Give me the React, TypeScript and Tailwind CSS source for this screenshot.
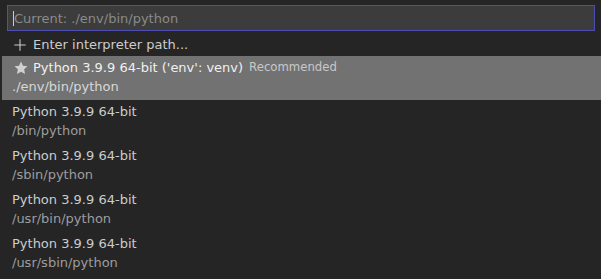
import React from "react";

const items = [
  { label: "Python 3.9.9 64-bit", path: "/bin/python" },
  { label: "Python 3.9.9 64-bit", path: "/sbin/python" },
  { label: "Python 3.9.9 64-bit", path: "/usr/bin/python" },
  { label: "Python 3.9.9 64-bit", path: "/usr/sbin/python" },
];

export default function App() {
  return (
    <div
      className="w-[601px] h-[279px] bg-[#252526] overflow-hidden text-[13px] text-[#cccccc]"
      style={{ fontFamily: '"DejaVu Sans", sans-serif' }}
    >
      <div className="pt-[5px] pl-[7px] pr-[6px]">
        <div className="h-[26px] border border-[#4d4db3] bg-[#3c3c3c] flex items-center pl-[5px]">
          <div className="w-px h-[15px] bg-[#cccccc]" />
          <span className="text-[#8a8a8a] leading-none">Current: ./env/bin/python</span>
        </div>
      </div>
      <div className="mt-[3px] pl-[2px]">
        <div className="h-[22px] flex items-center pl-[11px] gap-[6px]">
          <svg width="14" height="14" viewBox="0 0 16 16" fill="none" stroke="#cccccc" strokeWidth="1.2">
            <path d="M8 1.5v13M1.5 8h13" />
          </svg>
          <span>Enter interpreter path...</span>
        </div>
        <div className="h-[44px] bg-[#727272] flex flex-col pl-[10px]">
          <div className="h-[22px] flex items-center pt-[1px]">
            <svg width="14" height="14" viewBox="0 0 16 16" fill="#d0d0d0" className="ml-[2px] mr-[5px]">
              <path d="M8 0.6l2.25 4.75 5.2 0.65-3.85 3.55 1 5.2L8 12.25l-4.6 2.5 1-5.2L0.55 6l5.2-0.65z" />
            </svg>
            <span className="text-[#f0f0f0]">Python 3.9.9 64-bit ('env': venv)</span>
            <span className="text-[#c8c8c8] text-[11.7px] ml-[6px] pt-[1px]">Recommended</span>
          </div>
          <div className="h-[17px] flex items-center text-[#d8d8d8]">./env/bin/python</div>
        </div>
        {items.map((it, i) => (
          <div key={i} className="h-[44px] flex flex-col pl-[10px]">
            <div className="h-[22px] flex items-center pt-[1px]">{it.label}</div>
            <div className="h-[17px] flex items-center text-[#9d9d9d]">{it.path}</div>
          </div>
        ))}
      </div>
    </div>
  );
}
